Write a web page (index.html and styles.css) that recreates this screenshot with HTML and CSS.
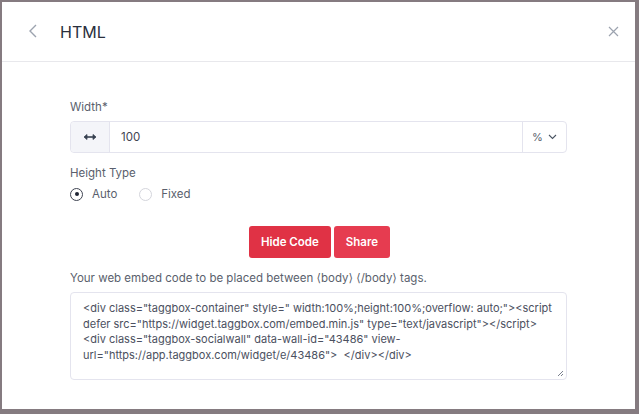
FILE: index.html
```html
<!DOCTYPE html>
<html>
<head>
<meta charset="utf-8">
<link rel="stylesheet" href="styles.css">
</head>
<body>
<div class="modal">
  <header class="head">
    <svg class="back" width="10" height="14" viewBox="0 0 10 14"><path d="M8 1 L2 7 L8 13" fill="none" stroke="#9ca3af" stroke-width="1.4"/></svg>
    <h1 class="title">HTML</h1>
    <svg class="close" width="11" height="11" viewBox="0 0 11 11"><path d="M1 1 L10 10 M10 1 L1 10" fill="none" stroke="#9ca3af" stroke-width="1.2"/></svg>
  </header>
  <main class="content">
    <label class="label">Width*</label>
    <div class="group">
      <div class="addon">
        <svg width="14" height="8" viewBox="0 0 14 8"><path d="M2 4 H12" stroke="#374151" stroke-width="1.6"/><path d="M4 1.5 L1 4 L4 6.5 Z M10 1.5 L13 4 L10 6.5 Z" fill="#374151" stroke="#374151" stroke-width="0.8"/></svg>
      </div>
      <div class="value">100</div>
      <div class="unit">%<svg width="9" height="6" viewBox="0 0 9 6"><path d="M1 1 L4.5 4.5 L8 1" fill="none" stroke="#4b5563" stroke-width="1.1"/></svg></div>
    </div>
    <label class="label l2">Height Type</label>
    <div class="radios">
      <span class="radio on"></span><span class="rtext">Auto</span>
      <span class="radio"></span><span class="rtext">Fixed</span>
    </div>
    <div class="buttons">
      <button class="btn dark">Hide Code</button>
      <button class="btn">Share</button>
    </div>
    <p class="note">Your web embed code to be placed between ⟨body⟩ ⟨/body⟩ tags.</p>
    <div class="code">&lt;div class="taggbox-container" style=" width:100%;height:100%;overflow: auto;"&gt;&lt;script defer src="https://widget.taggbox.com/embed.min.js" type="text/javascript"&gt;&lt;/script&gt; &lt;div class="taggbox-socialwall" data-wall-id="43486" view-url="https://app.taggbox.com/widget/e/43486"&gt;&nbsp; &lt;/div&gt;&lt;/div&gt;<svg class="grip" width="7" height="7" viewBox="0 0 7 7"><path d="M6 1 L1 6 M6 4 L4 6" stroke="#6b7280" stroke-width="0.9"/></svg></div>
  </main>
</div>
</body>
</html>
```
FILE: styles.css
```css
html, body { margin: 0; padding: 0; }
body {
  background: #857b80;
  font-family: Inter, "Noto Sans", "DejaVu Sans", sans-serif;
  width: 639px;
  height: 414px;
  overflow: hidden;
}
.modal {
  margin: 2px 4px 0 2px;
  width: 633px;
  height: 407px;
  background: #fff;
  display: flex;
  flex-direction: column;
}
.head {
  height: 59px;
  border-bottom: 1px solid #e8e8ec;
  display: flex;
  align-items: center;
  padding: 0 16px 0 26px;
}
.back { margin-top: -1px; }
.title {
  margin: 0 0 0 22px;
  font-size: 16px;
  font-weight: 400;
  color: #2a2f3d;
  flex: 1;
}
.content {
  padding: 37px 68px 0 68px;
  display: flex;
  flex-direction: column;
}
.label {
  font-size: 11.5px;
  line-height: 16px;
  color: #5a5f6d;
  height: 16px;
}
.l2 { margin-top: 12px; }
.group {
  margin-top: 6px;
  height: 30px;
  border: 1px solid #e4e4ee;
  border-radius: 4px;
  display: flex;
  align-items: stretch;
}
.addon {
  width: 38px;
  background: #f4f5f9;
  border-right: 1px solid #e4e4ee;
  border-radius: 4px 0 0 4px;
  display: flex;
  align-items: center;
  justify-content: center;
}
.value {
  flex: 1;
  display: flex;
  align-items: center;
  padding-left: 11px;
  font-size: 11.5px;
  color: #3f4452;
}
.unit {
  width: 43px;
  border-left: 1px solid #e4e4ee;
  display: flex;
  align-items: center;
  justify-content: center;
  gap: 5px;
  font-size: 11px;
  color: #5a5f6d;
}
.radios {
  margin-top: 5px;
  height: 16px;
  display: flex;
  align-items: center;
}
.radio {
  width: 11px;
  height: 11px;
  border: 1px solid #d4d5dc;
  border-radius: 50%;
  box-sizing: content-box;
  position: relative;
}
.radio.on { border-color: #3f4452; }
.radio.on::after {
  content: "";
  position: absolute;
  left: 3.5px; top: 3.5px;
  width: 4px; height: 4px;
  border-radius: 50%;
  background: #1f2433;
}
.rtext {
  font-size: 11.5px;
  color: #5a5f6d;
  margin-left: 9px;
  margin-right: 22px;
}
.buttons {
  margin-top: 24px;
  display: flex;
  justify-content: center;
  gap: 3px;
  padding-left: 2px;
}
.btn {
  height: 32px;
  border: none;
  border-radius: 3px;
  background: #e63c50;
  color: #fff;
  font-family: inherit;
  font-size: 11.5px;
  font-weight: 600;
  padding: 0 12px;
  white-space: nowrap;
}
.btn.dark { background: #e03245; }
.note {
  margin: 12px 0 0 0;
  font-size: 11.5px;
  line-height: 16px;
  color: #5a5f6d;
}
.code {
  margin-top: 6px;
  border: 1px solid #e4e4ee;
  border-radius: 4px;
  box-sizing: content-box;
  padding: 8px 12px 0 12px;
  height: 78px;
  font-size: 11px;
  line-height: 15.7px;
  color: #4b5060;
  position: relative;
}
.grip {
  position: absolute;
  right: 2px;
  bottom: 2px;
}
```
